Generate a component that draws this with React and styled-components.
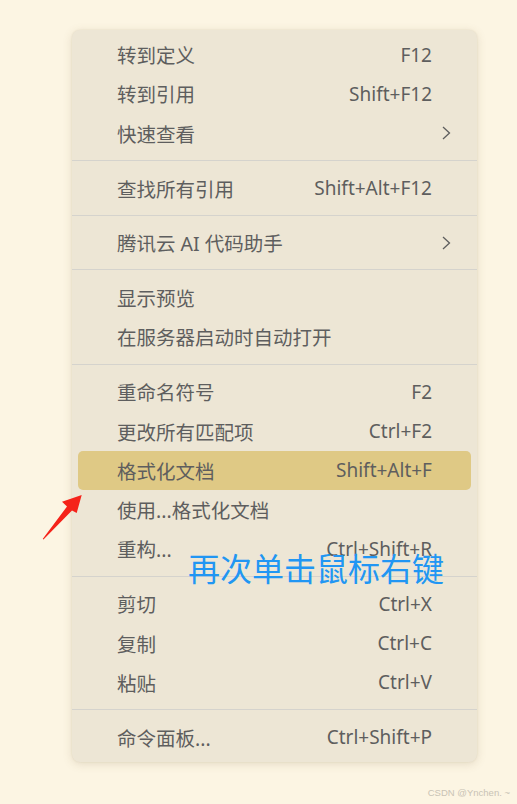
import React from "react";
import styled, { createGlobalStyle } from "styled-components";

const menu = [
  [
    { label: "转到定义", key: "F12" },
    { label: "转到引用", key: "Shift+F12" },
    { label: "快速查看", sub: true },
  ],
  [{ label: "查找所有引用", key: "Shift+Alt+F12" }],
  [{ label: "腾讯云 AI 代码助手", sub: true }],
  [{ label: "显示预览" }, { label: "在服务器启动时自动打开" }],
  [
    { label: "重命名符号", key: "F2" },
    { label: "更改所有匹配项", key: "Ctrl+F2" },
    { label: "格式化文档", key: "Shift+Alt+F", active: true },
    { label: "使用...格式化文档" },
    { label: "重构...", key: "Ctrl+Shift+R" },
  ],
  [
    { label: "剪切", key: "Ctrl+X" },
    { label: "复制", key: "Ctrl+C" },
    { label: "粘贴", key: "Ctrl+V" },
  ],
  [{ label: "命令面板...", key: "Ctrl+Shift+P" }],
];

export default function App() {
  return (
    <>
      <Global />
      <Page>
        <Menu>
          {menu.map((group, gi) => (
            <React.Fragment key={gi}>
              {gi > 0 && <Separator />}
              {group.map((item) => (
                <Item key={item.label} $active={item.active}>
                  <Label>{item.label}</Label>
                  {item.key && <Shortcut>{item.key}</Shortcut>}
                  {item.sub && (
                    <Chevron viewBox="0 0 9 14">
                      <path d="M1 1l6.5 6-6.5 6" fill="none" stroke="#5e5e5e" strokeWidth="1.3" />
                    </Chevron>
                  )}
                </Item>
              ))}
            </React.Fragment>
          ))}
          <Annotation>再次单击鼠标右键</Annotation>
        </Menu>
        <Arrow viewBox="0 0 60 70">
          <polygon points="12.7,59 13.5,59.6 42,30.5 46.7,33 51.7,15 32,21.7 37,26.5" fill="#f5231a" />
        </Arrow>
        <Watermark>CSDN @Ynchen. ~</Watermark>
      </Page>
    </>
  );
}

/* --------------------- STYLES --------------------- */

const Global = createGlobalStyle`
  html, body { margin:0; padding:0; background:#fcf5e3; }
  body { font-family:"Noto Sans", "Noto Sans CJK SC", sans-serif; }
`;

const Page = styled.div`
  position:relative;
  width:517px;
  height:804px;
  padding:30px 0 0 72px;
  box-sizing:border-box;
`;

const Menu = styled.div`
  position:relative;
  width:405px;
  padding:5px 0;
  background:#ede6d5;
  border-radius:8px;
  box-shadow:0 2px 10px rgba(120,100,60,0.18), 0 0 2px rgba(120,100,60,0.12);
`;

const Item = styled.div`
  display:flex;
  align-items:center;
  height:39.3px;
  margin:0 6px;
  padding:0 39px;
  border-radius:5px;
  background:${({ $active }) => ($active ? "#dfc985" : "transparent")};
  color:#5e5e5e;
`;

const Label = styled.span`
  flex:1;
  font-size:19.5px;
  white-space:nowrap;
`;

const Shortcut = styled.span`
  font-size:19px;
  white-space:nowrap;
`;

const Chevron = styled.svg`
  width:9px;
  height:14px;
  margin-right:-19px;
`;

const Separator = styled.div`
  height:1px;
  margin:7px 0 7.5px;
  background:#d5d3cd;
`;

const Annotation = styled.div`
  position:absolute;
  left:116px;
  top:521px;
  font-size:32px;
  line-height:1;
  color:#2196f3;
  font-family:"Noto Sans CJK SC", sans-serif;
  white-space:nowrap;
`;

const Arrow = styled.svg`
  position:absolute;
  left:30px;
  top:480px;
  width:60px;
  height:70px;
`;

const Watermark = styled.div`
  position:absolute;
  right:7px;
  bottom:6px;
  font-size:9.5px;
  font-family:"Liberation Sans", sans-serif;
  color:#c9c3b5;
`;
